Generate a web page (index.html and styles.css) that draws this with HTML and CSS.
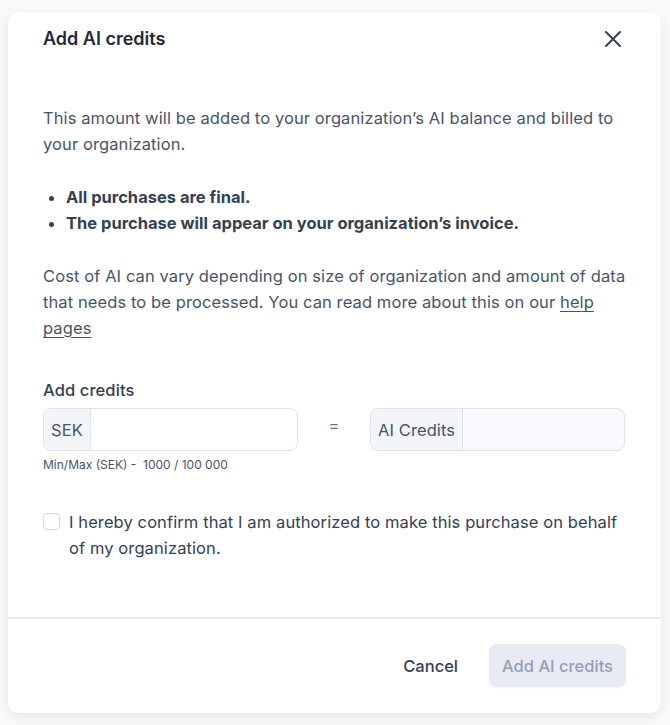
FILE: index.html
```html
<!DOCTYPE html>
<html lang="en">
<head>
<meta charset="utf-8">
<title>Add AI credits</title>
<link rel="stylesheet" href="styles.css">
</head>
<body>
<div class="modal">
  <div class="modal-header">
    <h2 class="title">Add AI credits</h2>
    <button class="close" aria-label="Close">
      <svg width="18" height="18" viewBox="0 0 18 18" fill="none" stroke="currentColor" stroke-width="2" stroke-linecap="round"><path d="M2 2 L16 16 M16 2 L2 16"/></svg>
    </button>
  </div>
  <div class="modal-body">
    <p class="intro">This amount will be added to your organization’s AI balance and billed to your organization.</p>
    <ul class="rules">
      <li>All purchases are final.</li>
      <li>The purchase will appear on your organization’s invoice.</li>
    </ul>
    <p class="cost">Cost of AI can vary depending on size of organization and amount of data that needs to be processed. You can read more about this on our <a href="#">help pages</a></p>
    <div class="label">Add credits</div>
    <div class="inputs">
      <div class="group">
        <span class="addon">SEK</span>
        <input class="field" type="text">
      </div>
      <span class="equals">=</span>
      <div class="group disabled">
        <span class="addon">AI Credits</span>
        <input class="field" type="text" disabled>
      </div>
    </div>
    <div class="hint">Min/Max (SEK) -&nbsp; 1000 / 100 000</div>
    <label class="confirm">
      <span class="box"></span>
      <span class="confirm-text">I hereby confirm that I am authorized to make this purchase on behalf of my organization.</span>
    </label>
  </div>
  <div class="modal-footer">
    <button class="btn-cancel">Cancel</button>
    <button class="btn-primary" disabled>Add AI credits</button>
  </div>
</div>
</body>
</html>
```
FILE: styles.css
```css
* { box-sizing: border-box; }
html, body { margin: 0; padding: 0; }
body {
  background: #fafafa;
  font-family: Inter, "Noto Sans", sans-serif;
  color: #475569;
  height: 725px;
  overflow: hidden;
}
.modal {
  margin: 12px 9px 0 8px;
  width: 653px;
  background: #fff;
  border-radius: 10px;
  box-shadow: 0 4px 14px rgba(0,0,0,0.08), 0 0 2px rgba(0,0,0,0.04);
}
.modal-header {
  display: flex;
  justify-content: space-between;
  align-items: center;
  padding: 14px 39px 0 35px;
}
.title {
  margin: 0;
  font-size: 18px;
  line-height: 26px;
  font-weight: 600;
  color: #1e293b;
}
.close {
  border: 0;
  background: none;
  padding: 0;
  color: #374151;
  display: flex;
}
.modal-body {
  padding: 53px 35px 56px 35px;
  font-size: 16.5px;
  line-height: 26px;
  letter-spacing: 0.1px;
}
.intro, .cost { margin: 0; }
.rules {
  margin: 27px 0;
  padding-left: 23px;
  font-weight: 700;
  color: #334155;
  letter-spacing: 0;
}
.cost a { color: #475569; text-decoration: underline; text-underline-offset: 3px; }
.label {
  margin-top: 37px;
  line-height: 24px;
  font-weight: 500;
  color: #334155;
}
.inputs {
  margin-top: 6px;
  display: flex;
  align-items: center;
}
.group {
  width: 255px;
  height: 43px;
  display: flex;
  border: 1px solid #dde2ec;
  border-radius: 8px;
  overflow: hidden;
  background: #fff;
}
.group.disabled { background: #f8f9fc; }
.addon {
  display: flex;
  align-items: center;
  padding: 0 7px;
  background: #f3f5f9;
  border-right: 1px solid #dde2ec;
  color: #475569;
}
.field {
  flex: 1;
  border: 0;
  background: transparent;
  min-width: 0;
  outline: none;
}
.equals {
  width: 72px;
  text-align: center;
  margin-top: -10px;
  color: #64748b;
}
.hint {
  margin-top: 5px;
  font-size: 12px;
  line-height: 18px;
  color: #475569;
  letter-spacing: 0;
}
.confirm {
  margin-top: 35px;
  display: flex;
  align-items: flex-start;
  gap: 9px;
  color: #334155;
}
.box {
  flex: none;
  width: 17px;
  height: 17px;
  margin-top: 4px;
  border: 1px solid #d1d7e2;
  border-radius: 4px;
}
.modal-footer {
  border-top: 2px solid #e9edf3;
  display: flex;
  justify-content: flex-end;
  align-items: center;
  gap: 31px;
  padding: 25px 35px 26px;
}
.btn-cancel {
  border: 0;
  background: none;
  font: inherit;
  font-size: 16.5px;
  font-weight: 500;
  color: #334155;
  padding: 0;
}
.btn-primary {
  border: 0;
  font: inherit;
  font-size: 16.5px;
  font-weight: 500;
  color: #94a0b4;
  background: #e8ebf3;
  border-radius: 8px;
  height: 43px;
  padding: 0 13px;
  box-shadow: 0 1px 2px rgba(0,0,0,0.06);
}
```
